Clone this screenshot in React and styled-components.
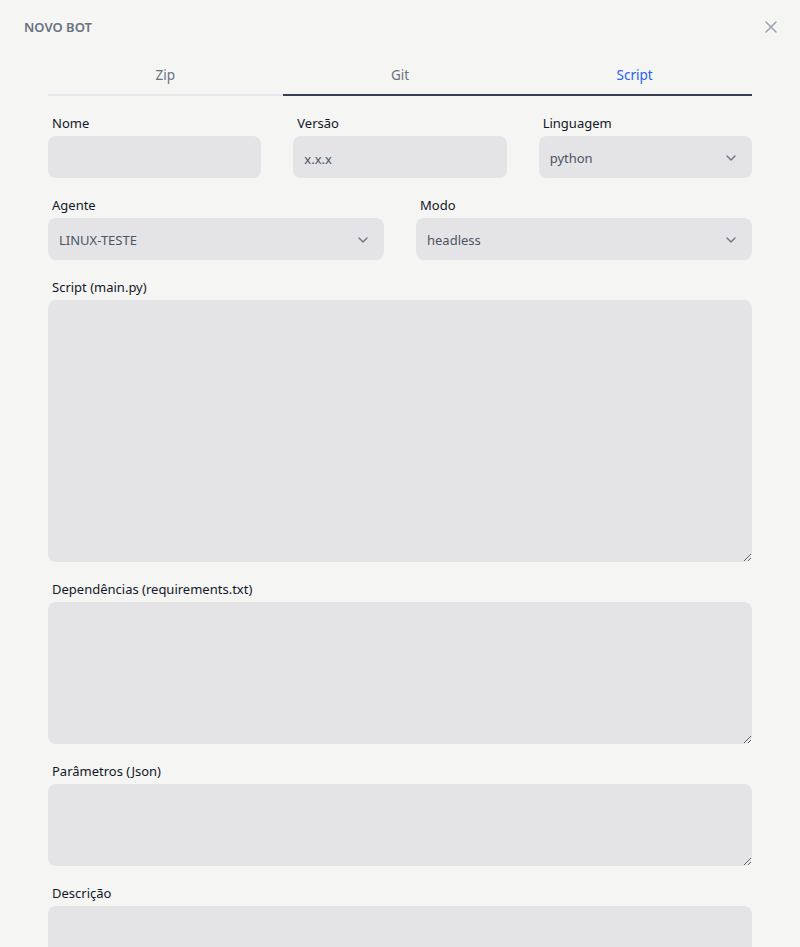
import styled, { createGlobalStyle } from 'styled-components';

const GlobalStyle = createGlobalStyle`
  body {
    margin: 0;
    background: #f5f5f4;
    font-family: "Noto Sans", "Open Sans", sans-serif;
    color: #111827;
  }
`;

const Page = styled.div`
  padding: 16px 24px 0;
  height: 947px;
  box-sizing: border-box;
  overflow: hidden;
`;

const Header = styled.div`
  display: flex;
  align-items: center;
  justify-content: space-between;
  height: 22px;
`;

const Title = styled.h2`
  margin: 0;
  font-size: 13px;
  font-weight: 600;
  color: #6b7280;
`;

const CloseButton = styled.button`
  border: none;
  background: none;
  padding: 0;
  color: #9ca3af;
  display: flex;
  margin-right: -5px;
  cursor: pointer;
`;

const Body = styled.div`
  padding: 0 24px;
`;

const Tabs = styled.div`
  display: grid;
  grid-template-columns: repeat(3, minmax(0, 1fr));
  margin-top: 21px;
  margin-bottom: 17px;
`;

const Tab = styled.button`
  border: none;
  background: none;
  font-family: inherit;
  font-size: 13.5px;
  height: 37px;
  padding: 0 0 3px;
  color: ${(p) => (p.$active ? '#2563eb' : '#6b7280')};
  border-bottom: 2px solid ${(p) => (p.$dark ? '#374151' : '#e5e7eb')};
`;

const Row = styled.div`
  display: grid;
  grid-template-columns: repeat(${(p) => p.$cols || 1}, minmax(0, 1fr));
  column-gap: 32px;
  margin-bottom: 17px;
`;

const Field = styled.div`
  display: flex;
  flex-direction: column;
  min-width: 0;
`;

const Label = styled.label`
  font-size: 13px;
  line-height: 20px;
  padding-left: 4px;
  margin-bottom: 3px;
  color: #111827;
`;

const Input = styled.input`
  width: 100%;
  min-width: 0;
  height: 42px;
  box-sizing: border-box;
  border: none;
  border-radius: 8px;
  background: #e4e4e7;
  padding: 3px 11px 0;
  font-family: inherit;
  font-size: 13px;
  color: #4b5563;
  outline: none;

  &::placeholder {
    color: #4b5563;
  }
`;

const SelectBox = styled.div`
  height: 42px;
  box-sizing: border-box;
  border-radius: 8px;
  background: #e4e4e7;
  padding: 2px 13px 0 11px;
  display: flex;
  align-items: center;
  justify-content: space-between;
  font-size: 13px;
  color: #4b5563;
`;

const TextArea = styled.textarea`
  height: ${(p) => p.$h}px;
  box-sizing: border-box;
  border: none;
  border-radius: 8px;
  background: #e4e4e7;
  padding: 10px 11px;
  font-family: inherit;
  font-size: 13px;
  resize: vertical;
  outline: none;
`;

const Chevron = () => (
  <svg width="16" height="16" viewBox="0 0 24 24" fill="none" stroke="#6b7280" strokeWidth="2" strokeLinecap="round" strokeLinejoin="round">
    <path d="M6 9l6 6 6-6" />
  </svg>
);

const Select = ({ value }) => (
  <SelectBox>
    <span>{value}</span>
    <Chevron />
  </SelectBox>
);

export default function App() {
  return (
    <Page>
      <GlobalStyle />
      <Header>
        <Title>NOVO BOT</Title>
        <CloseButton aria-label="Fechar">
          <svg width="20" height="20" viewBox="0 0 24 24" fill="none" stroke="currentColor" strokeWidth="1.8" strokeLinecap="round">
            <path d="M6 6l12 12M18 6L6 18" />
          </svg>
        </CloseButton>
      </Header>
      <Body>
        <Tabs>
          <Tab>Zip</Tab>
          <Tab $dark>Git</Tab>
          <Tab $dark $active>Script</Tab>
        </Tabs>
        <Row $cols={3}>
          <Field>
            <Label>Nome</Label>
            <Input />
          </Field>
          <Field>
            <Label>Versão</Label>
            <Input placeholder="x.x.x" />
          </Field>
          <Field>
            <Label>Linguagem</Label>
            <Select value="python" />
          </Field>
        </Row>
        <Row $cols={2}>
          <Field>
            <Label>Agente</Label>
            <Select value="LINUX-TESTE" />
          </Field>
          <Field>
            <Label>Modo</Label>
            <Select value="headless" />
          </Field>
        </Row>
        <Row>
          <Field>
            <Label>Script (main.py)</Label>
            <TextArea $h={262} />
          </Field>
        </Row>
        <Row>
          <Field>
            <Label>Dependências (requirements.txt)</Label>
            <TextArea $h={142} />
          </Field>
        </Row>
        <Row>
          <Field>
            <Label>Parâmetros (Json)</Label>
            <TextArea $h={82} />
          </Field>
        </Row>
        <Row>
          <Field>
            <Label>Descrição</Label>
            <TextArea $h={82} />
          </Field>
        </Row>
      </Body>
    </Page>
  );
}
